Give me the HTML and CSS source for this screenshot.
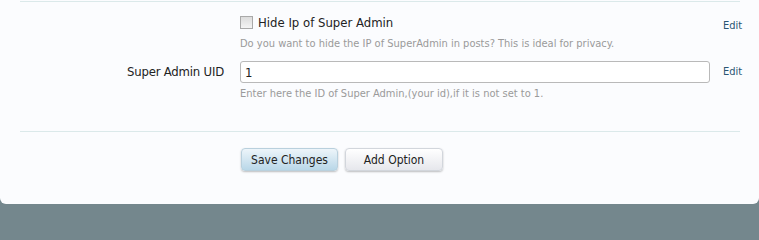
FILE: index.html
```html
<!DOCTYPE html>
<html>
<head>
<meta charset="utf-8">
<link rel="stylesheet" href="styles.css">
</head>
<body>
<div class="panel">
  <div class="sep"></div>
  <div class="option">
    <div class="label"></div>
    <div class="control">
      <label class="check"><span class="box"></span>Hide Ip of Super Admin</label>
      <p class="desc desc-first">Do you want to hide the IP of SuperAdmin in posts? This is ideal for privacy.</p>
    </div>
    <a class="edit edit-first" href="#">Edit</a>
  </div>
  <div class="option option-second">
    <div class="label label-input">Super Admin UID</div>
    <div class="control">
      <input class="text" type="text" value="1">
      <p class="desc desc-second">Enter here the ID of Super Admin,(your id),if it is not set to 1.</p>
    </div>
    <a class="edit edit-second" href="#">Edit</a>
  </div>
  <div class="sep sep-bottom"></div>
  <div class="buttons">
    <button class="btn btn-primary">Save Changes</button>
    <button class="btn btn-secondary">Add Option</button>
  </div>
</div>
</body>
</html>
```

FILE: styles.css
```css
html, body {
  margin: 0;
  padding: 0;
}
body {
  background: #74878d;
  font-family: "DejaVu Sans Condensed", "DejaVu Sans", sans-serif;
  color: #222;
  height: 207px;
  overflow: hidden;
}
.panel {
  background: #fbfcfe;
  height: 204px;
  border-radius: 0 0 6px 6px;
  padding: 1px 19px 0 20px;
  box-sizing: border-box;
}
.sep {
  border-top: 1px solid #dbe9ea;
}
.option {
  display: grid;
  grid-template-columns: 204px 470px 1fr;
  column-gap: 16px;
}
.option-second {
  margin-top: 10px;
}
.label {
  text-align: right;
  font-size: 13px;
  letter-spacing: -0.2px;
  color: #222;
}
.label-input {
  line-height: 22px;
}
.control {
  min-width: 0;
}
.check {
  display: flex;
  align-items: center;
  margin-top: 11px;
  height: 18px;
  font-size: 13px;
  color: #222;
}
.box {
  width: 11px;
  height: 11px;
  border: 1px solid #a9a9a9;
  background: linear-gradient(#dcdcdc, #f4f4f4);
  margin-right: 5px;
}
.desc {
  margin: 0;
  font-size: 11px;
  line-height: 14px;
  color: #9a9a9a;
}
.desc-first {
  margin-top: 6px;
}
.desc-second {
  margin-top: 4px;
}
.text {
  display: block;
  width: 470px;
  height: 22px;
  box-sizing: border-box;
  border: 1px solid #b9b9b9;
  border-radius: 3px;
  background: #fff;
  padding: 0 4px;
  font-family: inherit;
  font-size: 13px;
  color: #222;
  outline: none;
}
.edit {
  font-size: 11px;
  color: #2a5573;
  text-decoration: none;
  margin-left: -3px;
  justify-self: start;
}
.edit-first {
  margin-top: 17px;
}
.edit-second {
  line-height: 22px;
}
.sep-bottom {
  margin-top: 30px;
}
.buttons {
  display: flex;
  gap: 7px;
  margin: 16px 0 0 221px;
}
.btn {
  height: 23px;
  padding: 0;
  border: 1px solid #d2d6dc;
  border-radius: 4px;
  background: linear-gradient(#ffffff, #e6e7ec);
  box-shadow: 0 1px 2px rgba(0,0,0,0.25);
  font-family: inherit;
  font-size: 12px;
  color: #222;
}
.btn-primary {
  width: 97px;
  border-color: #b9d0dd;
  background: linear-gradient(#edf5fa, #b9d7e8);
}
.btn-secondary {
  width: 98px;
}
```
